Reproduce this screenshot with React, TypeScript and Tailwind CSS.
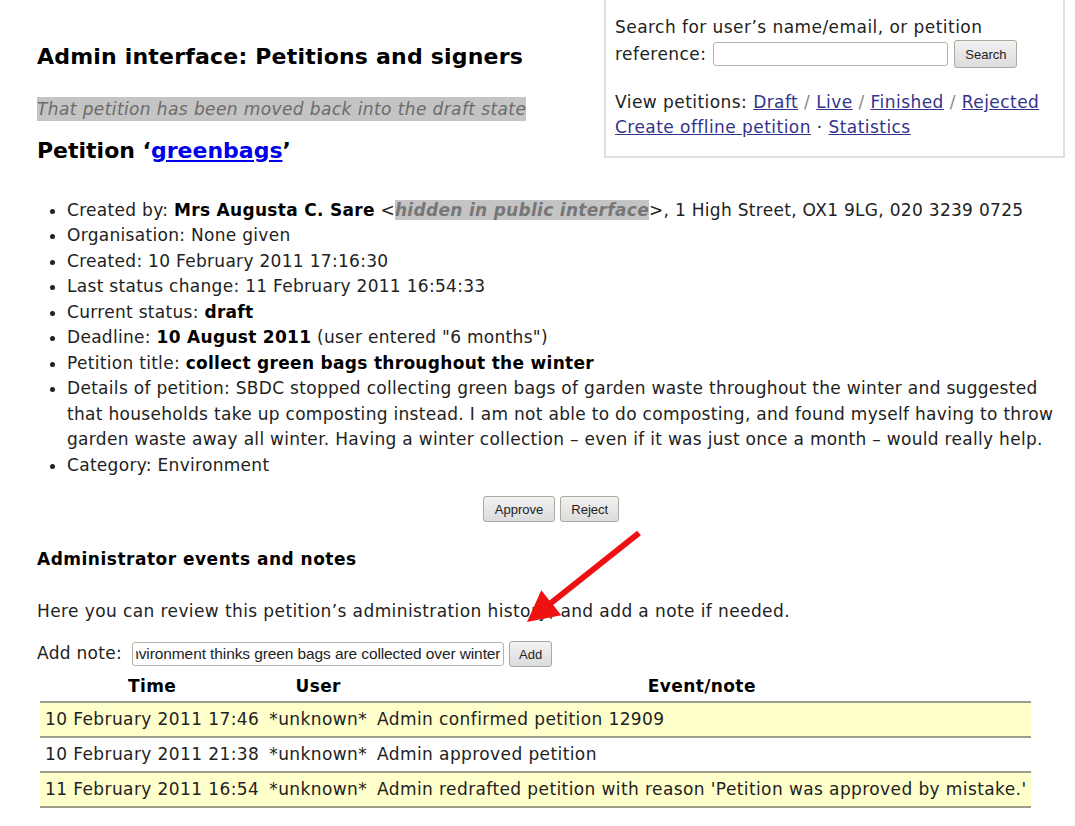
import React, { useEffect, useRef } from 'react';

interface NoteEvent {
  time: string;
  user: string;
  note: string;
}

const events: NoteEvent[] = [
  { time: '10 February 2011 17:46', user: '*unknown*', note: 'Admin confirmed petition 12909' },
  { time: '10 February 2011 21:38', user: '*unknown*', note: 'Admin approved petition' },
  {
    time: '11 February 2011 16:54',
    user: '*unknown*',
    note: "Admin redrafted petition with reason 'Petition was approved by mistake.'",
  },
];

const btn =
  "font-['Liberation_Sans',Arial,sans-serif] text-[13px] leading-none tracking-normal text-[#222] bg-gradient-to-b from-[#f2f2f2] to-[#dcdcdc] border border-[#a9a99c] rounded-[3px]";

const link = 'text-[#33338c] underline';

const SearchBox: React.FC = () => (
  <div className="w-[461px] border-x-2 border-b-2 border-[#e0e0e0] pl-[9px] pt-[15px] pb-[16px] text-[17px] leading-[25px] tracking-[0.45px]">
    <div>
      Search for user&rsquo;s name/email, or petition
      <br />
      <span className="inline-flex items-center align-middle">
        <span>reference:</span>
        <input className="ml-[7px] w-[235px] h-[24px] border border-[#b5b5a5] rounded-[3px] bg-white outline-none" />
        <button className={`${btn} ml-[6px] w-[63px] h-[28px]`}>Search</button>
      </span>
    </div>
    <div className="mt-[22px]">
      View petitions: <a className={link}>Draft</a> <span className="text-[#888]">/</span>{' '}
      <a className={link}>Live</a> <span className="text-[#888]">/</span> <a className={link}>Finished</a>{' '}
      <span className="text-[#888]">/</span> <a className={link}>Rejected</a>
      <br />
      <a className={link}>Create offline petition</a> &middot; <a className={link}>Statistics</a>
    </div>
  </div>
);

const NoteForm: React.FC = () => {
  const noteRef = useRef<HTMLInputElement>(null);

  // the note was typed in, so the field is scrolled to its end
  useEffect(() => {
    if (noteRef.current) noteRef.current.scrollLeft = noteRef.current.scrollWidth;
  }, []);

  return (
    <div className="mt-[18px] flex items-center tracking-[0.3px]">
      <span>Add note:</span>
      <input
        ref={noteRef}
        defaultValue="The environment thinks green bags are collected over winter"
        className="ml-[10px] h-[24px] w-[372px] rounded-[3px] border border-[#b5b5a5] bg-white px-[3px] font-['Liberation_Sans',Arial,sans-serif] text-[15.5px] tracking-[-0.1px] text-[#222] outline-none"
      />
      <button className={`${btn} ml-[5px] h-[26px] px-[9px]`}>Add</button>
    </div>
  );
};

export default function App() {
  return (
    <div className="relative w-[1075px] min-h-[826px] bg-white pl-[37px] pr-[10px] font-['DejaVu_Sans',sans-serif] text-[17px] text-[#222]">
      <div className="flex items-start justify-between">
        <div className="pt-[43px]">
          <h1 className="text-[22px] leading-[28px] tracking-[0.2px] font-bold text-black">
            Admin interface: Petitions and signers
          </h1>
          <p className="mt-[26px] inline-block bg-[#c4c4c4] italic text-[#6b6b6b] leading-[24px] tracking-[0.4px]">
            That petition has been moved back into the draft state
          </p>
          <h2 className="mt-[13px] text-[22px] leading-[30px] font-bold text-black">
            Petition &lsquo;<a className="text-[#0000ee] underline">greenbags</a>&rsquo;
          </h2>
        </div>
        <SearchBox />
      </div>

      <ul className="mt-[32px] list-disc pl-[30px] leading-[25.5px] tracking-[0.3px]">
        <li>
          Created by: <b className="text-black">Mrs Augusta C. Sare</b> &lt;
          <span className="bg-[#c4c4c4] italic font-bold text-[#777]">hidden in public interface</span>
          &gt;, 1 High Street, OX1 9LG, 020 3239 0725
        </li>
        <li>Organisation: None given</li>
        <li>Created: 10 February 2011 17:16:30</li>
        <li>Last status change: 11 February 2011 16:54:33</li>
        <li>
          Current status: <b className="text-black">draft</b>
        </li>
        <li>
          Deadline: <b className="text-black">10 August 2011</b> (user entered "6 months")
        </li>
        <li>
          Petition title: <b className="text-black">collect green bags throughout the winter</b>
        </li>
        <li>
          Details of petition: SBDC stopped collecting green bags of garden waste throughout the winter and
          suggested that households take up composting instead. I am not able to do composting, and found
          myself having to throw garden waste away all winter. Having a winter collection &ndash; even if it
          was just once a month &ndash; would really help.
        </li>
        <li>Category: Environment</li>
      </ul>

      <div className="mt-[18px] flex justify-center gap-[5px]">
        <button className={`${btn} h-[26px] px-[11px]`}>Approve</button>
        <button className={`${btn} h-[26px] px-[10px]`}>Reject</button>
      </div>

      <h3 className="mt-[25px] font-bold text-black leading-[24px] tracking-[0.5px]">
        Administrator events and notes
      </h3>
      <p className="mt-[28px] leading-[24px] tracking-[0.4px]">
        Here you can review this petition&rsquo;s administration history, and add a note if needed.
      </p>

      <NoteForm />

      <table className="mt-[4px] ml-[3px] border-collapse tracking-[0.4px]">
        <thead>
          <tr className="border-b-2 border-[#9d9d8c]">
            <th className="px-[5px] py-[3px] leading-[24px] text-center font-bold text-black">Time</th>
            <th className="px-[5px] py-[3px] leading-[24px] text-center font-bold text-black">User</th>
            <th className="px-[5px] py-[3px] leading-[24px] text-center font-bold text-black">Event/note</th>
          </tr>
        </thead>
        <tbody>
          {events.map((ev, i) => (
            <tr key={i} className={`border-b-2 border-[#9d9d8c] ${i % 2 === 0 ? 'bg-[#ffffcc]' : 'bg-white'}`}>
              <td className="px-[5px] py-[4px] leading-[25px] whitespace-nowrap">{ev.time}</td>
              <td className="px-[5px] py-[4px] leading-[25px] whitespace-nowrap">{ev.user}</td>
              <td className="px-[5px] py-[4px] leading-[25px] whitespace-nowrap">{ev.note}</td>
            </tr>
          ))}
        </tbody>
      </table>

      <svg className="pointer-events-none absolute left-0 top-0" width="1075" height="826" viewBox="0 0 1075 826">
        <polygon
          fill="#ee1111"
          points="637.1,530.7 549.4,600.4 541.3,590.2 527,622 561.2,615.2 553.2,605 640.9,535.3"
        />
      </svg>
    </div>
  );
}
